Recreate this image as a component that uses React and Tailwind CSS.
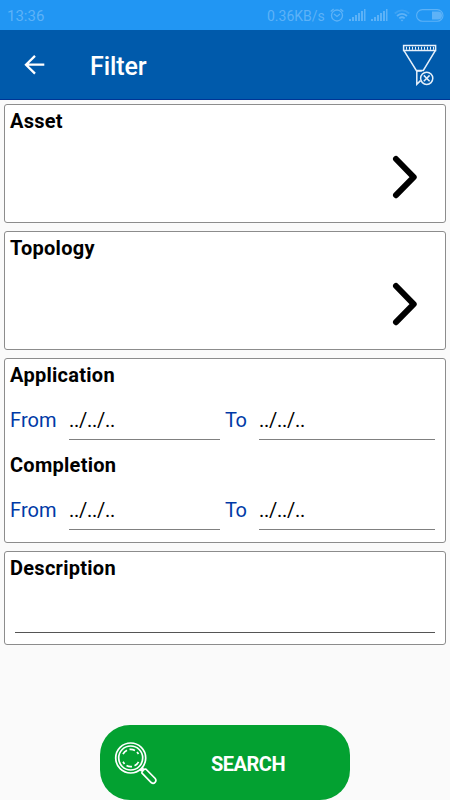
function StatusBar() {
  return (
    <div className="h-[30px] bg-[#2196f3] text-[#5db2f7] flex items-center justify-between pl-[7px] pr-[6px]">
      <span className="text-[15px] leading-[30px] pt-px">13:36</span>
      <div className="flex items-center">
        <span className="text-[14px] leading-[29px] pt-[2px] w-[63px] whitespace-nowrap">0.36KB/s</span>
        <AlarmIcon />
        <SignalIcon className="ml-[5px]" />
        <SignalIcon className="ml-[5px]" />
        <WifiIcon />
        <BatteryIcon />
      </div>
    </div>
  );
}

function AlarmIcon() {
  return (
    <svg width="14" height="14" viewBox="0 0 14 14" fill="none" stroke="currentColor" strokeWidth="1.3">
      <circle cx="7" cy="7.5" r="5.5" />
      <path d="M4 6l3 2.5L10 6M.7 3.6L3.6 1M13.3 3.6L10.4 1" />
    </svg>
  );
}

function SignalIcon({ className }) {
  return (
    <svg className={className} width="17" height="12" viewBox="0 0 17 12" fill="currentColor">
      <path d="M0 10h2v2H0zM3 8h2v4H3zM6 6h2v6H6zM9 4h2v8H9zM12 2h2v10h-2zM15 0h1.5v12H15z" />
    </svg>
  );
}

function WifiIcon() {
  return (
    <svg className="ml-[6px]" width="16" height="13" viewBox="0 0 16 13" fill="none" stroke="currentColor" strokeWidth="1.8">
      <path d="M.7 4.5Q8-1.8 15.3 4.5" opacity=".45" />
      <path d="M3 7q5-4.3 10 0M5.3 9.4q2.7-2.3 5.4 0" />
      <path d="M6.4 10.8h3.2L8 12.5z" fill="currentColor" stroke="none" />
    </svg>
  );
}

function BatteryIcon() {
  return (
    <svg className="ml-[6px]" width="28" height="13" viewBox="0 0 28 13">
      <rect x=".6" y=".6" width="26.4" height="11.6" rx="5.8" fill="none" stroke="currentColor" strokeWidth="1.1" />
      <path d="M16 2.5h6a4 4 0 0 1 0 8h-6z" fill="currentColor" />
    </svg>
  );
}

function Header() {
  return (
    <header className="h-[70px] bg-[#005aab] border-b border-[#003595] flex items-center text-white">
      <svg className="ml-[24px]" width="21" height="20" viewBox="0 0 21 20" fill="none" stroke="currentColor" strokeWidth="2.3">
        <path d="M20.3 9.7H2M11 .9L2 9.7l9 8.9" />
      </svg>
      <h1 className="ml-[45px] pt-[5px] text-[25px] leading-[30px] font-medium tracking-[-0.1px]">Filter</h1>
      <svg className="ml-auto mr-[12px]" width="36" height="42" viewBox="0 0 36 42" fill="none" stroke="#e6f0fa" strokeWidth="1.5">
        <path d="M1.6 1.6h32v5h-32z" />
        <path d="M4 4.2h28" strokeWidth="3" strokeDasharray="1 2" />
        <path d="M2 6.6l12.3 19.9h7L33.3 6.6M14.8 26.5v13.8l3.7-3.7" />
        <path d="M14.8 27h5" />
        <circle cx="24.7" cy="34.3" r="6.1" />
        <path d="M21.8 31.4l5.8 5.8M27.6 31.4l-5.8 5.8" />
      </svg>
    </header>
  );
}

function Card({ className, children }) {
  return (
    <section className={`mx-[4px] bg-white border border-[#8c8c8c] rounded-[3px] ${className}`}>
      {children}
    </section>
  );
}

function Title({ children }) {
  return (
    <h2 className="pl-[5px] h-[30px] text-[20px] leading-[32px] font-bold tracking-[0.27px] text-black">
      {children}
    </h2>
  );
}

function LinkCard({ title }) {
  return (
    <Card className="h-[119px]">
      <Title>{title}</Title>
      <svg className="ml-auto mr-[27px] mt-[20px]" width="26" height="44" viewBox="0 0 26 44" fill="none" stroke="#000" strokeWidth="6" strokeLinecap="round" strokeLinejoin="round">
        <path d="M4 4L21.7 22.2 4 40.2" />
      </svg>
    </Card>
  );
}

function DateRange() {
  return (
    <div className="flex h-[60px] pl-[5px] pt-[10px] text-[20px] leading-[42px]">
      <span className="w-[59px] text-[#0039a6] tracking-[0.1px]">From</span>
      <div className="w-[151px] h-[41px] border-b border-[#808080] text-black tracking-[-0.25px]">../../..</div>
      <span className="w-[39px] pl-[5px] text-[#0039a6] tracking-[-0.5px]">To</span>
      <div className="w-[176px] h-[41px] border-b border-[#808080] text-black tracking-[-0.25px]">../../..</div>
    </div>
  );
}

export default function App() {
  return (
    <div className="w-[450px] h-[800px] overflow-hidden bg-[#fafafa] font-['Roboto',sans-serif] flex flex-col">
      <StatusBar />
      <Header />
      <main className="flex flex-col gap-[8px] pt-[4px]">
        <LinkCard title="Asset" />
        <LinkCard title="Topology" />
        <Card className="h-[185px]">
          <Title>Application</Title>
          <DateRange />
          <Title>Completion</Title>
          <DateRange />
        </Card>
        <Card className="h-[94px]">
          <Title>Description</Title>
          <div className="mx-[10px] h-[51px] border-b border-[#555]" />
        </Card>
      </main>
      <button className="mt-auto mx-auto w-[250px] h-[75px] rounded-[30px] bg-[#03a131] text-white flex items-center">
        <svg className="ml-[14px]" width="44" height="44" viewBox="0 0 44 44" fill="none" stroke="currentColor" strokeWidth="1.7">
          <circle cx="16.7" cy="17" r="15" />
          <circle cx="16.7" cy="17" r="12" />
          <path d="M9 13.2a8.7 8.7 0 0 1 4-4M15.5 8.4a8.7 8.7 0 0 1 5.5 1M23 11l1.5 2M24.5 20.8a8.7 8.7 0 0 1-4 4M18 25.6a8.7 8.7 0 0 1-5.5-1M10.5 23L9 20.8" />
          <path d="M26.3 29.8l3.2-3.2M27 28l2.4 2.4" />
          <path d="M28 32.2l9.2 9.3c2.8 2.2 6-1.2 4-4L32 28.2c-2.3-.3-4.5 1.8-4 4z" />
        </svg>
        <span className="ml-[53px] pt-[2px] text-[20px] leading-[30px] font-bold tracking-[-0.5px]">SEARCH</span>
      </button>
    </div>
  );
}
